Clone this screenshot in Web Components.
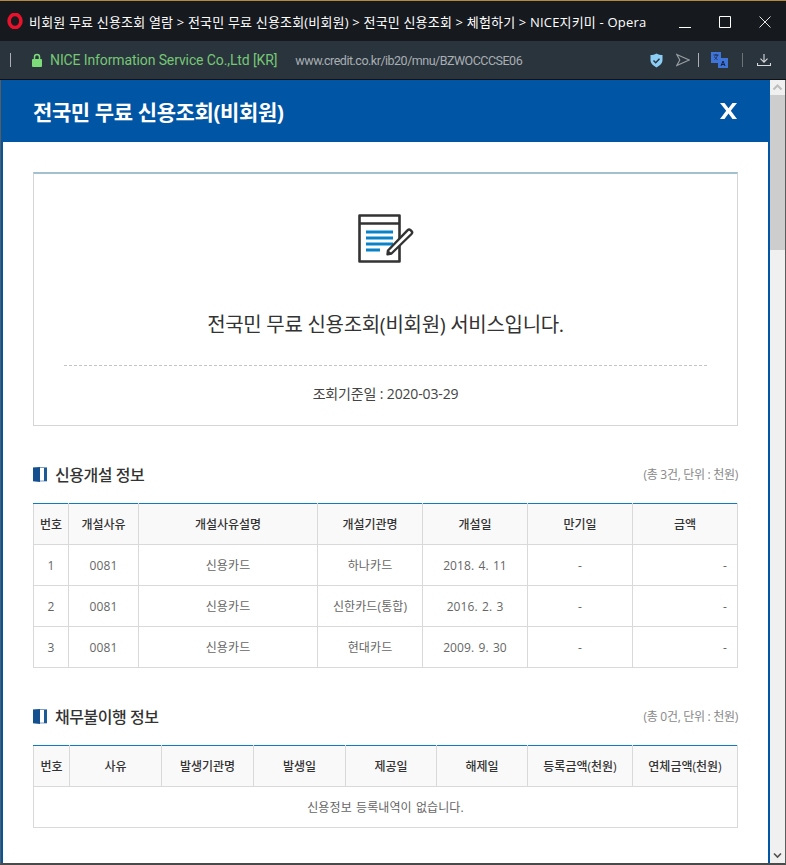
<!DOCTYPE html>
<html lang="ko">
<head>
<meta charset="utf-8">
<title>NICE</title>
<style>
    html, body { margin: 0; height: 100%; overflow: hidden; background: #fff; }
    body { font-family: "Open Sans", "Noto Sans CJK KR", sans-serif; }
</style>
</head>
<body>
<browser-window>
    <span slot="title">비회원 무료 신용조회 열람 &gt; 전국민 무료 신용조회(비회원) &gt; 전국민 신용조회 &gt; 체험하기 &gt; NICE지키미 - Opera</span>
    <popup-page heading="전국민 무료 신용조회(비회원)">
        <intro-box date="2020-03-29">전국민 무료 신용조회(비회원) 서비스입니다.</intro-box>
        <info-section id="open" heading="신용개설 정보" note="(총 3건, 단위 : 천원)"></info-section>
        <info-section id="debt" heading="채무불이행 정보" note="(총 0건, 단위 : 천원)"></info-section>
    </popup-page>
</browser-window>

<script>
const windowTemplate = document.createElement("template")
windowTemplate.innerHTML = `
    <style>
        :host { display: flex; flex-direction: column; width: 786px; height: 865px; overflow: hidden; }
        .title-bar {
            height: 40px; flex: none; background: #16191e; border-top: 1px solid #b5893f;
            display: flex; align-items: center; padding: 0 1px 0 7px; color: #fff;
            font-size: 13px; white-space: nowrap;
        }
        .logo { width: 16px; height: 16px; flex: none; margin-right: 6px; }
        .title { flex: 1; overflow: hidden; letter-spacing: .18px; }
        .win-btns { display: flex; flex: none; align-items: center; }
        .win-btns svg { display: block; width: 40px; height: 40px; }
        .address-bar {
            height: 38px; flex: none; background: #2a343c; border-bottom: 1px solid #0f1114;
            display: flex; align-items: center; color: #a9afb4; font-size: 13px; white-space: nowrap;
        }
        .bar { width: 1px; height: 14px; background: #aab0b5; flex: none; }
        .lock { margin: 0 8px 0 21px; flex: none; }
        .org { color: #76c776; font-family: Roboto, "Liberation Sans", sans-serif; font-size: 14px; margin-right: 18px; letter-spacing: -.11px; }
        .url { flex: 1; font-family: Roboto, "Liberation Sans", sans-serif; font-size: 12.500px; letter-spacing: -.5px; }
        .tools { display: flex; align-items: center; flex: none; padding-right: 15px; }
        .tools svg { display: block; flex: none; }
        .body { flex: 1; min-height: 0; display: flex; border-left: 1px solid #5c5c5c; border-right: 1px solid #5c5c5c; border-bottom: 2px solid #4a4a4a; }
        .scroller { flex: 1; min-width: 0; overflow: hidden; }
        .track { width: 15px; flex: none; background: #f0f0f0; display: flex; flex-direction: column; }
        .track svg { display: block; flex: none; }
        .thumb { height: 155px; background: #cdcdcd; flex: none; }
        .rest { flex: 1; }
    </style>
    <div class="title-bar">
        <svg class="logo" viewBox="0 0 16 16"><ellipse cx="8" cy="8" rx="5.900" ry="6.600" fill="none" stroke="#e8132b" stroke-width="3.600"/></svg>
        <div class="title"><slot name="title"></slot></div>
        <div class="win-btns">
            <svg viewBox="3 0 40 40"><path d="M17 26.500h12" stroke="#fff" fill="none"/></svg>
            <svg viewBox="3 0 40 40"><path d="M17.500 15.500h11v11h-11z" stroke="#fff" fill="none"/></svg>
            <svg viewBox="3 0 40 40"><path d="M17.500 15.500l11 11M28.500 15.500l-11 11" stroke="#e5e5e5" fill="none"/></svg>
        </div>
    </div>
    <div class="address-bar">
        <span class="bar" style="margin-left:10px"></span>
        <svg class="lock" width="10" height="14" viewBox="0 0 10 14">
            <path d="M2.500 6V4a2.500 2.500 0 0 1 5 0v2" fill="none" stroke="#7ddc7a" stroke-width="1.500"/>
            <rect x="0" y="6" width="10" height="8" rx="1" fill="#7ddc7a"/>
        </svg>
        <span class="org">NICE Information Service Co.,Ltd [KR]</span>
        <span class="url">www.credit.co.kr/ib20/mnu/BZWOCCCSE06</span>
        <div class="tools">
            <svg width="13" height="15" viewBox="0 0 13 15">
                <path d="M6.500 .5c2 1.200 4 1.500 6 1.500v5c0 3.500-3 5.700-6 7.500-3-1.800-6-4-6-7.500V2c2 0 4-.3 6-1.500z" fill="#8ccdf5"/>
                <path d="M3.500 7.500l2.200 2.200 3.800-3.900" fill="none" stroke="#2a343c" stroke-width="1.500"/>
            </svg>
            <svg width="14" height="14" viewBox="0 0 14 14" style="margin-left:13px">
                <path d="M.8 1.500L13.200 7 .8 12.500 3.800 7z" fill="none" stroke="#9aa0a5" stroke-width="1.100"/>
            </svg>
            <span class="bar" style="margin-left:8px"></span>
            <svg width="17" height="16" viewBox="0 0 17 16" style="margin-left:12px">
                <rect x="0" y="0" width="10" height="11" fill="#3f74d8"/>
                <rect x="7" y="6" width="10" height="10" fill="#3f74d8"/>
                <path d="M2.500 3h5M5 2v1.500M3.500 7.500C5 6.500 6 5 6.500 3M3.500 4.500c.5 1.300 1.500 2.300 3 3" fill="none" stroke="#1d2a4a" stroke-width=".9"/>
                <path d="M10 14l2-5 2 5M10.800 12.500h2.400" fill="none" stroke="#15233f" stroke-width="1"/>
            </svg>
            <span class="bar" style="margin-left:14px;background:#6b7379"></span>
            <svg width="14" height="14" viewBox="0 0 14 14" style="margin-left:14px">
                <path d="M7 1v8M3.500 5.700L7 9.200l3.500-3.500M.5 10v2.500h13V10" fill="none" stroke="#d8dadc" stroke-width="1.100"/>
            </svg>
        </div>
    </div>
    <div class="body">
        <div class="scroller"><slot></slot></div>
        <div class="track">
            <svg width="15" height="15" viewBox="0 0 15 15"><path d="M3.500 9.500L7.500 5.500l4 4" fill="none" stroke="#bdbdbd" stroke-width="2"/></svg>
            <div class="thumb"></div>
            <div class="rest"></div>
            <svg width="15" height="15" viewBox="0 0 15 15"><path d="M4 5.500L7.500 9 11 5.500" fill="none" stroke="#505050" stroke-width="1.600"/></svg>
        </div>
    </div>
`
class BrowserWindow extends HTMLElement
{
    constructor()
    {
        super()
        const shadow = this.attachShadow({mode:"open"})
        shadow.append(windowTemplate.content.cloneNode(true))
    }
}
customElements.define("browser-window", BrowserWindow)

const pageTemplate = document.createElement("template")
pageTemplate.innerHTML = `
    <style>
        :host {
            display: block; height: 783px; overflow: hidden; box-sizing: border-box;
            border-left: 2px solid #0055a5; border-right: 2px solid #0055a5;
            background: #fff; color: #333;
        }
        header {
            height: 62px; margin-left: -2px; margin-right: -2px; background: #0055a5;
            display: flex; align-items: center; justify-content: space-between;
            padding: 0 33px 0 32px; color: #fff;
        }
        h1 { margin: 0; font-size: 21px; font-weight: 700; letter-spacing: -.4px; }
        .close { width: 17px; height: 16px; display: block; }
        main { padding: 30px 30px 0; }
    </style>
    <header>
        <h1></h1>
        <svg class="close" viewBox="0 0 17 16"><path d="M0 0h4.500l4 5.200 4-5.200H17l-6.200 7.800L17 16h-4.500l-4-5.500-4 5.500H0l6.200-8.200z" fill="#fff"/></svg>
    </header>
    <main><slot></slot></main>
`
class PopupPage extends HTMLElement
{
    constructor()
    {
        super()
        const shadow = this.attachShadow({mode:"open"})
        shadow.append(pageTemplate.content.cloneNode(true))
        shadow.querySelector("h1").textContent = this.getAttribute("heading")
    }
}
customElements.define("popup-page", PopupPage)

const introTemplate = document.createElement("template")
introTemplate.innerHTML = `
    <style>
        :host {
            display: block; box-sizing: border-box; height: 254px; margin-bottom: 36px;
            border: 1px solid #d5d5d5; border-top: 2px solid #a2c0ce; text-align: center;
        }
        svg { display: block; margin: 40px auto 0; }
        .message { margin: 47px 0 0; height: 28px; line-height: 28px; font-size: 20px; color: #333; letter-spacing: -.3px; }
        .line { margin: 26px 30px 0; border-top: 1px dashed #c4c4c4; }
        .date { margin: 19px 0 0; font-size: 14px; line-height: 18px; color: #444; letter-spacing: -.15px; }
    </style>
    <svg width="56" height="50" viewBox="0 0 56 50">
        <path d="M1.500 1.500h40v46h-40zM1.500 9.500h40" fill="none" stroke="#333" stroke-width="2.600" stroke-linejoin="round"/>
        <path d="M8 18h27M8 24h27M8 30h27M8 36h14" stroke="#0a82c8" stroke-width="2.800"/>
        <path d="M30 36.500l-.5 3.800 4-.8L53.500 20a2 2 0 0 0 0-2.800l-1-1a2 2 0 0 0-2.800 0z" fill="#fff" stroke="#333" stroke-width="2.400" stroke-linejoin="round"/>
        <path d="M29.500 40.500l.5-4.500 3.800 3.500z" fill="#333"/>
    </svg>
    <p class="message"><slot></slot></p>
    <div class="line"></div>
    <p class="date"></p>
`
class IntroBox extends HTMLElement
{
    constructor()
    {
        super()
        const shadow = this.attachShadow({mode:"open"})
        shadow.append(introTemplate.content.cloneNode(true))
        shadow.querySelector(".date").textContent = "조회기준일 : " + this.getAttribute("date")
    }
}
customElements.define("intro-box", IntroBox)

const sectionTemplate = document.createElement("template")
sectionTemplate.innerHTML = `
    <style>
        :host { display: block; margin-bottom: 36px; }
        .head { display: flex; align-items: center; height: 24px; margin-bottom: 17px; }
        .head svg { flex: none; margin-right: 8px; }
        h2 { margin: 0; flex: 1; font-size: 16px; font-weight: 500; color: #333; letter-spacing: -.45px; }
        .note { font-size: 12px; color: #888; letter-spacing: -.3px; }
        table { width: 704px; border-collapse: collapse; table-layout: fixed; font-size: 12px; color: #666; }
        th { background: #f9f9f9; color: #333; font-weight: 500; font-size: 12px; }
        th, td { border: 1px solid #d9d9d9; height: 41px; padding: 0; text-align: center; box-sizing: border-box; }
        td { letter-spacing: .1px; word-spacing: 1px; }
        thead th { border-top: 1px solid #0f7cc2; }
        td.right { text-align: right; padding-right: 10px; }
    </style>
    <div class="head">
        <svg width="14" height="15" viewBox="0 0 14 15">
            <path d="M0 1.500h14v12H0z" fill="#fff"/>
            <path d="M0 .5h14M0 14h14" stroke="#7c9cc0" stroke-width="1"/>
            <path d="M0 1l7-1v15l-7-1z" fill="#14508f"/>
            <path d="M11 1h3v13h-3z" fill="#1c5c96"/>
        </svg>
        <h2></h2>
        <span class="note"></span>
    </div>
    <table><colgroup></colgroup><thead><tr></tr></thead><tbody></tbody></table>
`
class InfoSection extends HTMLElement
{
    constructor()
    {
        super()
        const shadow = this.attachShadow({mode:"open"})
        shadow.append(sectionTemplate.content.cloneNode(true))
        shadow.querySelector("h2").textContent = this.getAttribute("heading")
        shadow.querySelector(".note").textContent = this.getAttribute("note")
    }

    // columns is [label, width]; rows are arrays of cells or {empty: text}
    setData(columns, rows)
    {
        let shadow = this.shadowRoot
        let colgroup = shadow.querySelector("colgroup")
        let headRow = shadow.querySelector("thead tr")
        let body = shadow.querySelector("tbody")
        columns.forEach(([label, width]) => {
            let col = document.createElement("col")
            col.style.width = width + "px"
            colgroup.append(col)
            let th = document.createElement("th")
            th.textContent = label
            headRow.append(th)
        })
        rows.forEach((row) => {
            let tr = document.createElement("tr")
            if (row.empty)
            {
                let td = document.createElement("td")
                td.colSpan = columns.length
                td.textContent = row.empty
                tr.append(td)
            }
            else
            {
                row.forEach((cell, i) => {
                    let td = document.createElement("td")
                    td.textContent = cell
                    if (i === row.length - 1) td.className = "right"
                    tr.append(td)
                })
            }
            body.append(tr)
        })
    }
}
customElements.define("info-section", InfoSection)

document.querySelector("#open").setData(
    [["번호", 35], ["개설사유", 70], ["개설사유설명", 179], ["개설기관명", 105], ["개설일", 105], ["만기일", 105], ["금액", 105]],
    [
        ["1", "0081", "신용카드", "하나카드", "2018. 4. 11", "-", "-"],
        ["2", "0081", "신용카드", "신한카드(통합)", "2016. 2. 3", "-", "-"],
        ["3", "0081", "신용카드", "현대카드", "2009. 9. 30", "-", "-"],
    ]
)
document.querySelector("#debt").setData(
    [["번호", 36], ["사유", 92], ["발생기관명", 92], ["발생일", 92], ["제공일", 91], ["해제일", 91], ["등록금액(천원)", 105], ["연체금액(천원)", 105]],
    [{empty: "신용정보 등록내역이 없습니다."}]
)
</script>
</body>
</html>
